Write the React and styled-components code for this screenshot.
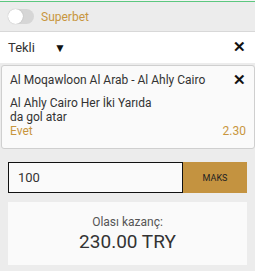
import styled, { createGlobalStyle } from "styled-components";

const Global = createGlobalStyle`
  html, body {
    margin: 0;
    padding: 0;
    background: #ffffff;
  }
  body {
    font-family: Roboto, "Liberation Sans", Arial, sans-serif;
    color: #333333;
  }
`;

const Slip = styled.div`
  width: 255px;
  height: 271px;
  background: #ececec;
  display: flex;
  flex-direction: column;
  box-sizing: border-box;
  border-top: 1px solid #f4f4f4;
`;

const TopBar = styled.div`
  height: 29px;
  border-top: 1px solid #5cc77f;
  border-bottom: 1px solid #d8d8d8;
  display: flex;
  align-items: center;
  gap: 7px;
  padding-left: 8px;
`;

const Toggle = styled.div`
  width: 26px;
  height: 15px;
  border-radius: 8px;
  background: #d6d6d6;
  position: relative;
  &::after {
    content: "";
    position: absolute;
    left: 0;
    top: 0;
    width: 15px;
    height: 15px;
    border-radius: 50%;
    background: #ffffff;
    box-shadow: 0 0 1px rgba(0, 0, 0, 0.3);
  }
`;

const ToggleLabel = styled.span`
  font-size: 12px;
  color: #c8963e;
`;

const TypeRow = styled.div`
  height: 31px;
  background: #ffffff;
  display: flex;
  align-items: center;
  padding: 0 9px 0 8px;
  font-size: 13px;
`;

const TypeName = styled.span`
  width: 46px;
`;

const Arrow = styled.span`
  font-size: 12px;
  color: #111;
  flex: 1;
`;

const Close = styled.span`
  font-size: 15px;
  font-weight: 700;
  line-height: 1;
  color: #111;
`;

const Card = styled.div`
  margin: 2px 0 0 1px;
  height: 84px;
  box-sizing: border-box;
  background: #fafafa;
  border: 1px solid #cfcfcf;
  border-radius: 3px;
  padding: 7px 8px 0 8px;
  display: flex;
  flex-direction: column;
  font-size: 12px;
`;

const CardHead = styled.div`
  display: flex;
  justify-content: space-between;
  align-items: center;
  height: 14px;
  margin-bottom: 9px;
`;

const Selection = styled.div`
  max-width: 152px;
  line-height: 14px;
`;

const OddsRow = styled.div`
  display: flex;
  justify-content: space-between;
  color: #c8963e;
  line-height: 15px;
`;

const Bottom = styled.div`
  padding: 13px 8px 0 8px;
  display: flex;
  flex-direction: column;
  gap: 9px;
`;

const StakeRow = styled.div`
  display: flex;
  height: 31px;
`;

const StakeInput = styled.div`
  flex: 1;
  border: 1px solid #111;
  background: #fafafa;
  display: flex;
  align-items: center;
  padding-left: 9px;
  font-size: 13px;
`;

const MaxButton = styled.div`
  width: 64px;
  background: #c49340;
  display: flex;
  align-items: center;
  justify-content: center;
  font-size: 9px;
  color: #222;
`;

const WinBox = styled.div`
  height: 63px;
  background: #fafafa;
  display: flex;
  flex-direction: column;
  align-items: center;
  justify-content: center;
`;

const WinLabel = styled.div`
  font-size: 12px;
  color: #555;
  line-height: 16px;
`;

const WinValue = styled.div`
  font-size: 19px;
  color: #333;
  line-height: 24px;
`;

export default function App() {
  return (
    <>
      <Global />
      <Slip>
        <TopBar>
          <Toggle />
          <ToggleLabel>Superbet</ToggleLabel>
        </TopBar>
        <TypeRow>
          <TypeName>Tekli</TypeName>
          <Arrow>▼</Arrow>
          <Close>✕</Close>
        </TypeRow>
        <Card>
          <CardHead>
            <span>Al Moqawloon Al Arab - Al Ahly Cairo</span>
            <Close>✕</Close>
          </CardHead>
          <Selection>Al Ahly Cairo Her İki Yarıda da gol atar</Selection>
          <OddsRow>
            <span>Evet</span>
            <span>2.30</span>
          </OddsRow>
        </Card>
        <Bottom>
          <StakeRow>
            <StakeInput>100</StakeInput>
            <MaxButton>MAKS</MaxButton>
          </StakeRow>
          <WinBox>
            <WinLabel>Olası kazanç:</WinLabel>
            <WinValue>230.00 TRY</WinValue>
          </WinBox>
        </Bottom>
      </Slip>
    </>
  );
}
